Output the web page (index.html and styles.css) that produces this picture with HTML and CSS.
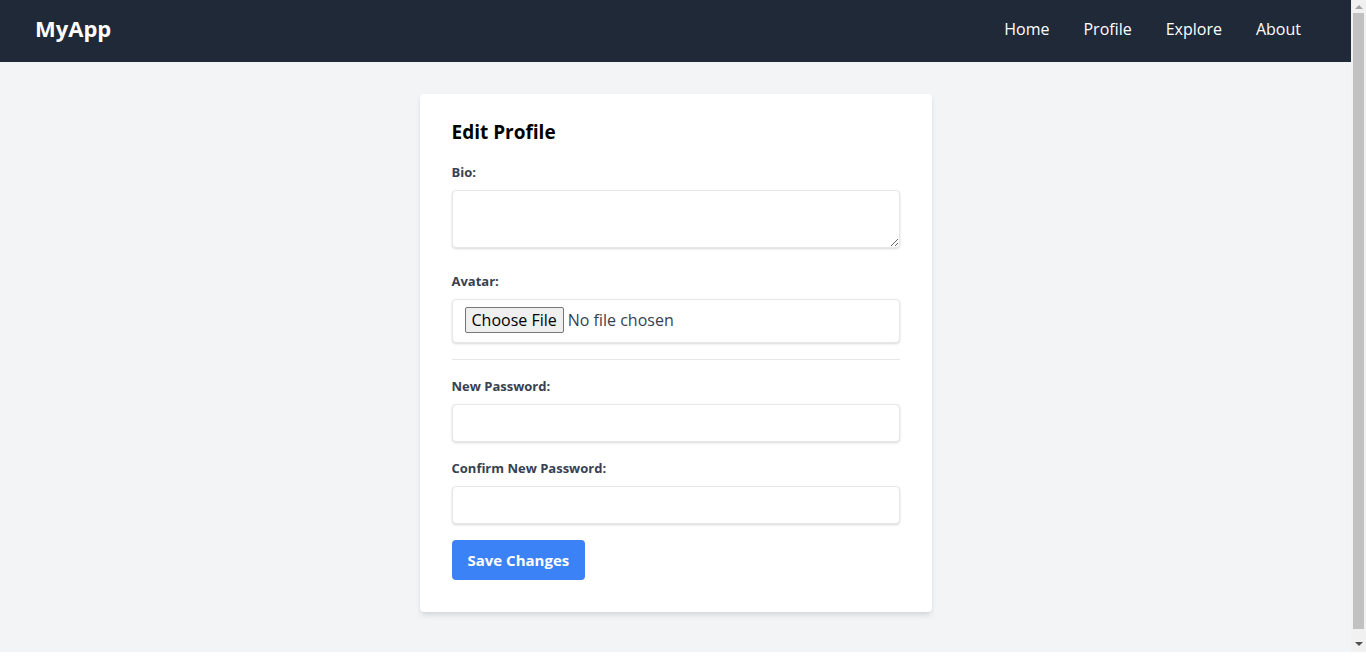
FILE: index.html
```html
<!DOCTYPE html>
<html lang="en">
<head>
<meta charset="utf-8">
<title>Edit Profile - MyApp</title>
<link rel="stylesheet" href="styles.css">
</head>
<body>
<div class="window">
  <div class="viewport">
    <nav class="navbar">
      <a class="brand" href="#">MyApp</a>
      <ul class="nav-links">
        <li><a href="#">Home</a></li>
        <li><a href="#">Profile</a></li>
        <li><a href="#">Explore</a></li>
        <li><a href="#">About</a></li>
      </ul>
    </nav>
    <main class="main">
      <form class="card">
        <h2 class="card-title">Edit Profile</h2>
        <div class="field field-bio">
          <label class="label" for="bio">Bio:</label>
          <textarea class="input textarea" id="bio" rows="2"></textarea>
        </div>
        <div class="field">
          <label class="label" for="avatar">Avatar:</label>
          <input class="input file-input" id="avatar" type="file">
        </div>
        <hr class="divider">
        <div class="field">
          <label class="label" for="pw">New Password:</label>
          <input class="input" id="pw" type="password">
        </div>
        <div class="field">
          <label class="label" for="pw2">Confirm New Password:</label>
          <input class="input" id="pw2" type="password">
        </div>
        <button class="btn" type="submit">Save Changes</button>
      </form>
    </main>
  </div>
  <div class="scrollbar" aria-hidden="true">
    <div class="sb-btn"><span class="arrow-up"></span></div>
    <div class="sb-track"><div class="sb-thumb"></div></div>
    <div class="sb-btn"><span class="arrow-down"></span></div>
  </div>
</div>
</body>
</html>
```
FILE: styles.css
```css
* { box-sizing: border-box; }
html, body { margin: 0; padding: 0; }
body {
  font-family: "Open Sans", "Noto Sans", sans-serif;
  background: #fff;
  color: #111827;
  overflow: hidden;
}
.window {
  display: flex;
  height: 652px;
}
.viewport {
  flex: 1;
  min-width: 0;
  background: #f3f4f6;
  overflow: hidden;
}
.scrollbar {
  width: 15px;
  flex: none;
  background: #f1f1f1;
  display: flex;
  flex-direction: column;
}
.sb-btn {
  height: 13px;
  display: flex;
  align-items: center;
  justify-content: center;
}
.sb-track {
  flex: 1;
  padding: 0 2px 0 2px;
  display: flex;
}
.sb-thumb {
  flex: 1;
  margin: 0 0 10px;
  background: #c1c1c1;
}
.arrow-up {
  width: 0; height: 0;
  border-left: 4px solid transparent;
  border-right: 4px solid transparent;
  border-bottom: 4px solid #a3a3a3;
}
.arrow-down {
  width: 0; height: 0;
  border-left: 4px solid transparent;
  border-right: 4px solid transparent;
  border-top: 4px solid #505050;
  margin-top: -4px;
}
.navbar {
  height: 62px;
  background: #1f2937;
  display: flex;
  align-items: center;
  justify-content: space-between;
  padding: 0 34px 4px 35px;
}
.brand {
  color: #fff;
  font-weight: 700;
  font-size: 22px;
  text-decoration: none;
  margin-bottom: 2px;
}
.nav-links {
  list-style: none;
  margin: 0;
  padding: 0;
  display: flex;
  gap: 2px;
}
.nav-links a {
  display: block;
  color: #fff;
  text-decoration: none;
  font-size: 16px;
  padding: 8px 16px;
}
.main { padding-top: 32px; }
.card {
  width: 512px;
  margin: 0 auto;
  background: #fff;
  border-radius: 4px;
  box-shadow: 0 4px 6px -1px rgba(0,0,0,.1), 0 2px 4px -1px rgba(0,0,0,.06);
  padding: 24px 32px 32px;
}
.card-title {
  margin: 0 0 16px;
  font-size: 19px;
  line-height: 28px;
  font-weight: 700;
  color: #000;
}
.field { margin-bottom: 16px; }
.field-bio { margin-bottom: 23px; }
.label {
  display: block;
  color: #374151;
  font-size: 13px;
  line-height: 20px;
  font-weight: 700;
  margin-bottom: 8px;
}
.input {
  display: block;
  width: 100%;
  border: 1px solid #e5e7eb;
  border-radius: 4px;
  box-shadow: 0 1px 3px 0 rgba(0,0,0,.1), 0 1px 2px 0 rgba(0,0,0,.06);
  padding: 8px 12px;
  font-family: inherit;
  font-size: 16px;
  line-height: 20px;
  color: #374151;
  background: #fff;
  outline: none;
  margin: 0;
}
.textarea { height: 58px; resize: vertical; }
.file-input { height: 44px; padding: 7px 12px; color: #374151; }
.file-input::file-selector-button {
  font-family: inherit;
  font-size: 16px;
  color: #000;
  background: #efefef;
  border: 1px solid #767676;
  border-radius: 2px;
  padding: 1px 6px;
  height: 26px;
  margin-right: 4px;
}
.divider {
  border: 0;
  border-top: 1px solid #e5e7eb;
  margin: 0 0 16px;
}
.btn {
  display: block;
  background: #3b82f6;
  color: #fff;
  font-family: inherit;
  font-weight: 700;
  font-size: 15px;
  line-height: 24px;
  border: 0;
  border-radius: 4px;
  padding: 8px 16px;
  height: 40px;
}
```
